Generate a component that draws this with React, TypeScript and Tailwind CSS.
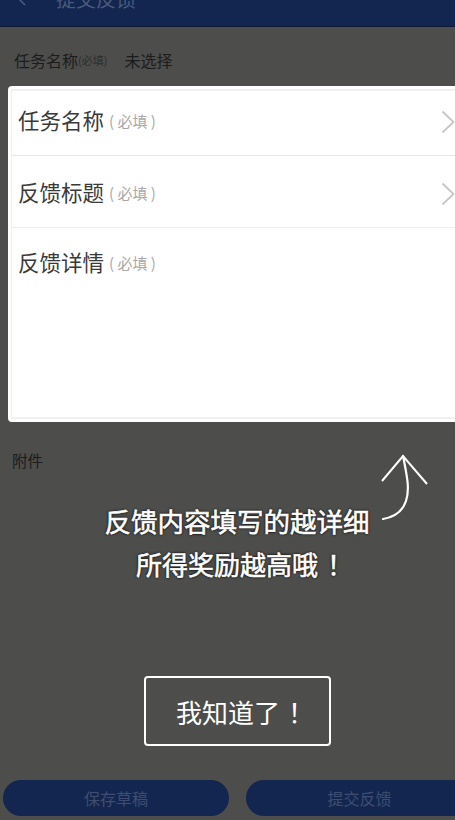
const cjk = "font-['Noto_Sans_CJK_SC','Noto_Sans',sans-serif]";

function Chevron() {
  return (
    <svg width="14" height="24" viewBox="0 0 14 24" fill="none" className="shrink-0">
      <path d="M1.5 1.5 12.5 12 1.5 22.5" stroke="#c6c6c6" strokeWidth="1.8" />
    </svg>
  );
}

function Row({ label, arrow, className }: { label: string; arrow?: boolean; className: string }) {
  return (
    <div className={`flex items-start justify-between pl-[6px] ${className}`}>
      <div className="flex items-center h-[32px]">
        <span className="text-[21.5px] leading-none text-[#3a3a3a]">{label}</span>
        <span className="ml-[5px] text-[15px] leading-none text-[#a8a8a8] whitespace-pre">( 必填 )</span>
      </div>
      {arrow && (
        <div className="pt-[6px]">
          <Chevron />
        </div>
      )}
    </div>
  );
}

export default function App() {
  return (
    <div className={`relative h-[820px] w-[455px] overflow-hidden bg-[#4d4d4b] ${cjk}`}>
      {/* page under the guide */}
      <div className="flex h-[27px] items-end border-b border-[#0c1a38] bg-[#12264f] pl-[16px]">
        <svg width="10" height="16" viewBox="0 0 10 16" fill="none" className="mb-[20px]">
          <path d="M9 1 2 8l7 7" stroke="#4a5a7c" strokeWidth="1.6" />
        </svg>
        <span className="ml-[30px] mb-[15px] text-[20px] leading-[24px] text-[#4a5a7c]">提交反馈</span>
      </div>

      <div className="flex items-center pl-[14px] pt-[22px] text-[#1c1c1c]">
        <span className="text-[16px] leading-[22px]">任务名称</span>
        <span className="text-[11px] leading-[22px] text-[#2e2e2e]">(必填)</span>
        <span className="ml-[17px] text-[16px] leading-[22px]">未选择</span>
      </div>

      <div className="pl-[12px] pt-[378px] text-[15.5px] leading-[22px] text-[#1c1c1c]">附件</div>

      <div className="absolute bottom-[4px] left-[3px] flex w-[480px] gap-[17px]">
        <div className="flex h-[36px] w-[226px] items-center justify-center rounded-full bg-[#12264f] text-[16px] text-[#3f4e70]">
          保存草稿
        </div>
        <div className="flex h-[36px] w-[226px] items-center justify-center rounded-full bg-[#12264f] text-[16px] text-[#3f4e70]">
          <span className="ml-[1px]">提交反馈</span>
        </div>
      </div>

      {/* guide overlay */}
      <div className="absolute inset-0 flex flex-col">
        <div className="ml-[8px] mt-[86px] h-[336px] rounded-l-[4px] border-y-[3px] border-l-[3px] border-white bg-white">
          <div className="flex h-[330px] flex-col border-y-[2px] border-l-[1px] border-[#f1f1f1]">
            <Row label="任务名称" arrow className="h-[65px] border-b border-[#e8e8e8] pt-[13px]" />
            <Row label="反馈标题" arrow className="h-[72px] border-b border-[#ececec] pt-[20px]" />
            <Row label="反馈详情" className="pt-[18px]" />
          </div>
        </div>

        <div className="mt-[84px] flex flex-col items-center gap-[13px] pl-[19px] text-[26.5px] leading-[30px] text-white [-webkit-text-stroke:0.6px_white] [text-shadow:0_0_3px_#111,0_0_2px_#111,0_0_1px_#111]">
          <span>反馈内容填写的越详细</span>
          <span className="pl-[15px] text-[26px]">
            所得奖励越高哦<span className="ml-[9px]">！</span>
          </span>
        </div>

        <div className="ml-[144px] mt-[97px] flex h-[70px] w-[187px] items-center justify-center rounded-[4px] border-2 border-white pl-[15px] text-[26px] text-white">
          我知道了<span className="ml-[8px]">！</span>
        </div>
      </div>

      <svg
        className="absolute left-[375px] top-[450px]"
        width="60"
        height="75"
        viewBox="0 0 60 75"
        fill="none"
      >
        <path d="M7 31 28 6 52 34" stroke="white" strokeWidth="2" />
        <path d="M28 6c4 20 7 33 3 45-3 9-11 16-23 18" stroke="white" strokeWidth="2.2" strokeLinecap="round" />
      </svg>
    </div>
  );
}
